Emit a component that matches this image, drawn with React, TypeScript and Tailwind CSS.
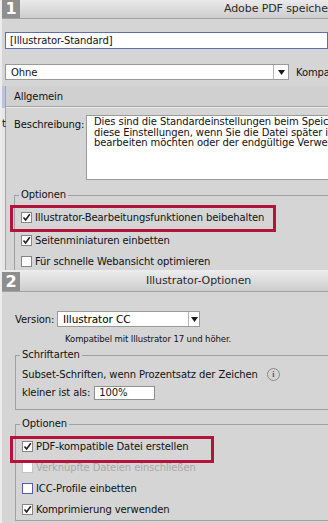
import React from "react";

const font = { fontFamily: '"DejaVu Sans", "Liberation Sans", sans-serif' };

function Check({ checked, disabled, focus }: { checked?: boolean; disabled?: boolean; focus?: boolean }) {
  return (
    <span
      className={`flex h-[11px] w-[11px] shrink-0 items-center justify-center bg-white border ${
        focus ? "border-[#4f5fa8]" : disabled ? "border-[#c4c4c4]" : "border-[#858585]"
      }`}
    >
      {checked && (
        <svg width="9" height="9" viewBox="0 0 9 9">
          <path d="M1.5 4.5 L3.6 7 L7.8 1.2" fill="none" stroke="#1d1d1d" strokeWidth="1.6" />
        </svg>
      )}
    </span>
  );
}

function CheckRow({
  label,
  checked,
  disabled,
  focus,
}: {
  label: string;
  checked?: boolean;
  disabled?: boolean;
  focus?: boolean;
}) {
  return (
    <div className="flex h-[21px] items-center gap-[3px] pl-[6px]">
      <Check checked={checked} disabled={disabled} focus={focus} />
      <span className={`whitespace-nowrap ${disabled ? "text-[#a9a9a9]" : "text-[#111]"}`}>{label}</span>
    </div>
  );
}

function TitleBar({ num, children, left }: { num: string; children: React.ReactNode; left: string }) {
  return (
    <div className="flex h-[21px] items-stretch border-b border-[#a2a2a2] bg-gradient-to-b from-[#eaeaea] to-[#cdcdcd]">
      <div className="flex w-[18px] shrink-0 items-center justify-center bg-[#8e8e8e] text-[16px] font-bold leading-[18px] tracking-normal text-white">
        {num}
      </div>
      <div className={`flex flex-1 items-center overflow-hidden whitespace-nowrap text-[11px] text-[#2a2a2a] ${left}`}>
        {children}
      </div>
    </div>
  );
}

function GroupBox({ title, children, className }: { title: string; children: React.ReactNode; className?: string }) {
  return (
    <div className={`relative border-l border-t border-b border-[#a0a0a0] ${className ?? ""}`}>
      <span className="absolute left-[4px] top-[-8px] bg-[#d5d5d5] px-[2px] leading-[14px] text-[#111]">
        {title}
      </span>
      {children}
    </div>
  );
}

function Arrow() {
  return (
    <svg width="7" height="5" viewBox="0 0 7 5">
      <path d="M0 0 H7 L3.5 5 Z" fill="#1a1a1a" />
    </svg>
  );
}

export default function App() {
  return (
    <div
      className="relative h-[523px] w-[328px] overflow-hidden bg-[#d5d5d5] text-[10px] tracking-[-0.1px]"
      style={font}
    >
      {/* panel 1 */}
      <div className="relative flex h-[270px] flex-col overflow-hidden border-l-2 border-[#ececec]">
        <TitleBar num="1" left="pl-[204px]">
          Adobe PDF speichern
        </TitleBar>

        <div className="ml-[3px] mt-[13px] flex h-[18px] items-center whitespace-nowrap border border-[#5f6fae] bg-white pl-[4px] text-[#111]">
          [Illustrator-Standard]
        </div>

        <div className="mt-[15px] flex items-center">
          <div className="ml-[3px] flex h-[16px] w-[284px] shrink-0 items-center border border-[#9a9a9a] bg-white">
            <span className="flex-1 pl-[5px] text-[#111]">Ohne</span>
            <span className="flex h-full w-[15px] items-center justify-center border-l border-[#b5b5b5]">
              <Arrow />
            </span>
          </div>
          <span className="ml-[7px] whitespace-nowrap text-[#111]">Kompatibilität:</span>
        </div>

        <div className="mt-[6px] flex flex-1">
          <div className="flex w-[4px] shrink-0 flex-col border-r border-[#a4a4a4] bg-[#e6e6e6]">
            <div className="h-[22px] bg-[#b7c5de]" />
            <span className="mt-[8px] text-[#111]">t</span>
          </div>

          <div className="flex flex-1 flex-col">
            <div className="flex h-[21px] items-center border-b border-[#a6a6a6] bg-[#d0d0d0] pl-[8px] text-[#111] shadow-[0_1px_0_#ececec]">
              Allgemein
            </div>

            <div className="mt-[8px] flex items-start">
              <span className="ml-[8px] mt-[2px] w-[72px] shrink-0 text-[#111]">Beschreibung:</span>
              <div className="h-[65px] flex-1 overflow-hidden whitespace-nowrap border border-[#9a9a9a] bg-white pl-[7px] pt-[1px] leading-[10.5px] text-[#111]">
                <div>Dies sind die Standardeinstellungen beim Speichern</div>
                <div>diese Einstellungen, wenn Sie die Datei später in</div>
                <div>bearbeiten möchten oder der endgültige Verwendung</div>
              </div>
            </div>

            <GroupBox title="Optionen" className="ml-[8px] mt-[15px] flex-1 border-b-0 pt-[11px]">
              <CheckRow label="Illustrator-Bearbeitungsfunktionen beibehalten" checked />
              <div className="h-[2px]" />
              <CheckRow label="Seitenminiaturen einbetten" checked />
              <CheckRow label="Für schnelle Webansicht optimieren" />
            </GroupBox>
          </div>
        </div>

        <div className="pointer-events-none absolute left-[8px] top-[205px] h-[27px] w-[266px] border-[3px] border-[#b3143b]" />
      </div>

      {/* panel 2 */}
      <div className="relative flex h-[253px] flex-col overflow-hidden border-l-2 border-t-2 border-[#ececec]">
        <TitleBar num="2" left="pl-[126px]">
          Illustrator-Optionen
        </TitleBar>

        <div className="mt-[19px] flex items-center">
          <span className="ml-[13px] w-[42px] text-[#111]">Version:</span>
          <div className="flex h-[16px] w-[143px] items-center border border-[#9a9a9a] bg-white">
            <span className="flex-1 pl-[5px] text-[10.5px] text-[#000]">Illustrator CC</span>
            <span className="flex h-full w-[11px] items-center justify-center border-l border-[#b5b5b5]">
              <Arrow />
            </span>
          </div>
        </div>

        <div className="ml-[63px] mt-[6px] text-[8.5px] text-[#111]">Kompatibel mit Illustrator 17 und höher.</div>

        <GroupBox title="Schriftarten" className="ml-[13px] mt-[9px] h-[56px] pt-[11px]">
          <div className="flex items-center pl-[6px] text-[#111]">
            <span className="whitespace-nowrap">Subset-Schriften, wenn Prozentsatz der Zeichen</span>
            <span
              className="ml-[9px] flex h-[13px] w-[13px] items-center justify-center rounded-full border border-[#8a8a8a] text-[8px] font-bold leading-none text-[#555]"
              style={{ fontFamily: '"Liberation Serif", serif' }}
            >
              i
            </span>
          </div>
          <div className="mt-[3px] flex items-center pl-[6px] text-[#111]">
            <span>kleiner ist als:</span>
            <span className="ml-[4px] flex h-[14px] w-[61px] items-center border border-[#8f8f8f] bg-white pl-[4px]">
              100%
            </span>
          </div>
        </GroupBox>

        <GroupBox title="Optionen" className="mb-[2px] ml-[13px] mt-[14px] flex-1 pt-[11px]">
          <CheckRow label="PDF-kompatible Datei erstellen" checked />
          <CheckRow label="Verknüpfte Dateien einschließen" disabled />
          <CheckRow label="ICC-Profile einbetten" focus />
          <CheckRow label="Komprimierung verwenden" checked />
        </GroupBox>

        <div className="pointer-events-none absolute left-[8px] top-[164px] h-[27px] w-[204px] border-[3px] border-[#b3143b]" />
      </div>
    </div>
  );
}
